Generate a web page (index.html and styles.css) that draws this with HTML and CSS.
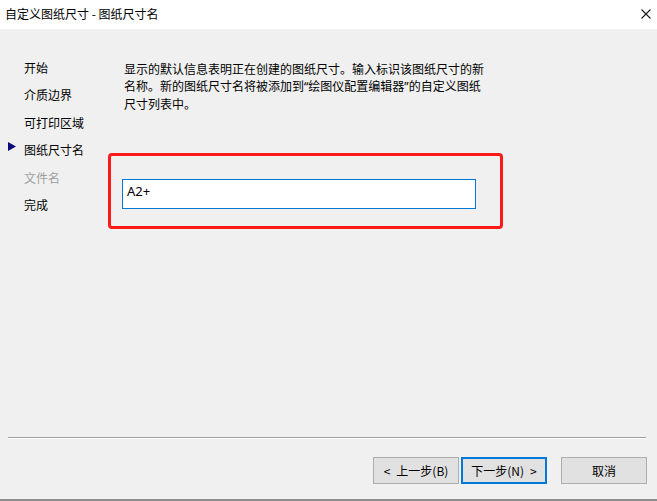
FILE: index.html
```html
<!DOCTYPE html>
<html lang="zh-CN">
<head>
<meta charset="utf-8">
<title>自定义图纸尺寸 - 图纸尺寸名</title>
<link rel="stylesheet" href="styles.css">
</head>
<body>
<div class="window">
  <div class="titlebar">
    <span class="title">自定义图纸尺寸 - 图纸尺寸名</span>
    <svg class="close" width="10" height="10" viewBox="0 0 10 10"><path d="M0.5 0.5L9.5 9.5M9.5 0.5L0.5 9.5" stroke="#1a1a1a" stroke-width="1.1" fill="none"/></svg>
  </div>
  <div class="main">
    <ul class="nav">
      <li class="nav-item"><span class="marker"></span><span>开始</span></li>
      <li class="nav-item"><span class="marker"></span><span>介质边界</span></li>
      <li class="nav-item"><span class="marker"></span><span>可打印区域</span></li>
      <li class="nav-item current"><span class="marker"><svg width="8" height="9" viewBox="0 0 8 9"><path d="M0 0L8 4.5L0 9Z" fill="#0a0a7a"/></svg></span><span>图纸尺寸名</span></li>
      <li class="nav-item disabled"><span class="marker"></span><span>文件名</span></li>
      <li class="nav-item"><span class="marker"></span><span>完成</span></li>
    </ul>
    <div class="content">
      <p class="desc">显示的默认信息表明正在创建的图纸尺寸。输入标识该图纸尺寸的新<br>名称。新的图纸尺寸名将被添加到<span class="q">“</span>绘图仪配置编辑器<span class="q">”</span>的自定义图纸<br>尺寸列表中。</p>
      <div class="highlight">
        <div class="textbox">A2+</div>
      </div>
    </div>
  </div>
  <div class="separator"></div>
  <div class="buttons">
    <div class="btn"><span class="arrow-l">&lt;</span>上一步(B)</div>
    <div class="btn primary">下一步(N)<span class="arrow-r">&gt;</span></div>
    <div class="btn cancel">取消</div>
  </div>
</div>
</body>
</html>
```

FILE: styles.css
```css
* { box-sizing: border-box; }
html, body {
  margin: 0;
  padding: 0;
  background: #f0f0f0;
}
body {
  font-family: "Noto Sans CJK SC", "Noto Sans", sans-serif;
  font-size: 12px;
  color: #000;
}
.window {
  width: 657px;
  height: 501px;
  display: flex;
  flex-direction: column;
  background: #f0f0f0;
  border-bottom: 2px solid #8c8c8c;
}
.titlebar {
  height: 29px;
  background: #fff;
  display: flex;
  align-items: center;
  justify-content: space-between;
  padding: 0 6px 0 5px;
  flex: none;
}
.title {
  font-size: 12px;
  line-height: 16px;
  color: #000;
  margin-top: -1px;
}
.close {
  display: block;
  margin-top: -1px;
}
.main {
  height: 408px;
  display: flex;
  flex: none;
}
.nav {
  list-style: none;
  margin: 0;
  padding: 25px 0 0 8px;
  width: 108px;
  flex: none;
}
.nav-item {
  display: flex;
  align-items: center;
  height: 27.5px;
  line-height: 16px;
}
.marker {
  width: 16px;
  flex: none;
  display: flex;
  align-items: center;
}
.marker svg {
  display: block;
  margin-top: -8px;
}
.disabled { color: #a0a0a0; }
.content {
  flex: 1;
  padding-top: 31px;
}
.desc {
  margin: 0 0 0 16px;
  line-height: 17px;
  font-size: 12px;
}
.q {
  font-family: "Noto Sans", sans-serif;
}
.highlight {
  margin-top: 41px;
  width: 395px;
  height: 76px;
  border: 3px solid #ff1a1a;
  border-radius: 4px;
  padding: 23px 0 0 11px;
}
.textbox {
  width: 354px;
  height: 30px;
  background: #fff;
  border: 1px solid #0078d7;
  padding: 2px 0 0 4px;
  font-family: "Noto Sans", "Noto Sans CJK SC", sans-serif;
  font-size: 13px;
  line-height: 18px;
}
.separator {
  margin: 0 11px 0 8px;
  height: 2px;
  border-top: 1px solid #a0a0a0;
  border-bottom: 1px solid #fff;
  flex: none;
}
.buttons {
  display: flex;
  justify-content: flex-end;
  padding: 18px 10px 0 0;
  gap: 2px;
}
.btn {
  width: 86px;
  height: 27px;
  background: #e1e1e1;
  border: 1px solid #adadad;
  display: flex;
  align-items: center;
  justify-content: center;
  font-size: 12px;
  line-height: 16px;
}
.arrow-l { margin-right: 6px; }
.arrow-r { margin-left: 6px; }
.btn.primary {
  border: 2px solid #0078d7;
}
.btn.cancel {
  margin-left: 12px;
}
```
